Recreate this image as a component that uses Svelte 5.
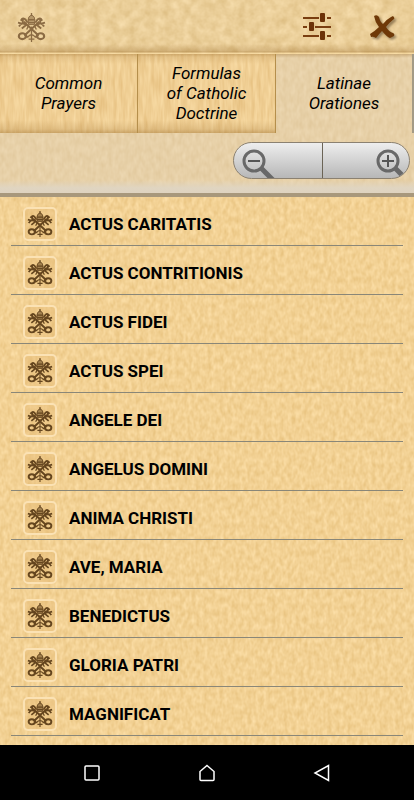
<script>
  const tabs = [
    ['Common', 'Prayers'],
    ['Formulas', 'of Catholic', 'Doctrine'],
    ['Latinae', 'Orationes'],
  ];

  const prayers = [
    'ACTUS CARITATIS',
    'ACTUS CONTRITIONIS',
    'ACTUS FIDEI',
    'ACTUS SPEI',
    'ANGELE DEI',
    'ANGELUS DOMINI',
    'ANIMA CHRISTI',
    'AVE, MARIA',
    'BENEDICTUS',
    'GLORIA PATRI',
    'MAGNIFICAT',
  ];

  let active = $state(2);
</script>

<!-- Parchment grain, stretched over whichever panel holds it -->
{#snippet grain(kind)}
  <svg class="grain" aria-hidden="true">
    <rect width="100%" height="100%" filter="url(#grain-{kind})" />
  </svg>
{/snippet}

<!-- Tiara over crossed keys -->
{#snippet emblem()}
  <svg class="emblem" viewBox="0 0 30 30" fill="none" stroke="currentColor" aria-hidden="true">
    <g stroke-width="2.2">
      <path d="M7 9 L22 23 M23 9 L8 23" />
      <ellipse cx="5.500" cy="24" rx="3.600" ry="3" />
      <ellipse cx="24.500" cy="24" rx="3.600" ry="3" />
      <path d="M8 22 L11 25.500 M22 22 L19 25.500" />
    </g>
    <path d="M15 14 V30 M11 25 Q15 20 19 25 M12 27 H18" stroke-width="1.3" />
    <g stroke-width="2">
      <path d="M2 14 Q5 9 9 12 M4 8 Q6 4 9 7 L11 10 M1 10 L5 11 M5 16 L10 12 M6 6 V11" />
      <path d="M28 14 Q25 9 21 12 M26 8 Q24 4 21 7 L19 10 M29 10 L25 11 M25 16 L20 12 M24 6 V11" />
    </g>
    <path d="M12 12 L11.500 7 Q11.500 3.500 15 2 Q18.500 3.500 18.500 7 L18 12 Z" fill="currentColor" fill-opacity="0.55" stroke-width="1" />
    <path d="M15 0 V3 M11.500 7 H18.500 M11.700 10 H18.300 M12 13 L10 17 M18 13 L20 17" stroke-width="1.400" />
  </svg>
{/snippet}

<svg class="defs" width="0" height="0" aria-hidden="true">
  <filter id="grain-header" x="0" y="0" width="100%" height="100%" color-interpolation-filters="sRGB">
    <feTurbulence type="fractalNoise" baseFrequency="0.11" numOctaves="3" seed="4" />
    <feColorMatrix values="0 0 0 .12 .86  0 0 0 .15 .735  0 0 0 .20 .50  0 0 0 0 1" />
  </filter>
  <filter id="grain-tab" x="0" y="0" width="100%" height="100%" color-interpolation-filters="sRGB">
    <feTurbulence type="fractalNoise" baseFrequency="0.3 0.05" numOctaves="2" seed="9" />
    <feColorMatrix values="0 0 0 .10 .89  0 0 0 .15 .735  0 0 0 .20 .48  0 0 0 0 1" />
  </filter>
  <filter id="grain-pale" x="0" y="0" width="100%" height="100%" color-interpolation-filters="sRGB">
    <feTurbulence type="fractalNoise" baseFrequency="0.24 0.12" numOctaves="2" seed="2" />
    <feColorMatrix values="0 0 0 .06 .875  0 0 0 .08 .775  0 0 0 .11 .60  0 0 0 0 1" />
  </filter>
  <filter id="grain-list" x="0" y="0" width="100%" height="100%" color-interpolation-filters="sRGB">
    <feTurbulence type="fractalNoise" baseFrequency="0.25 0.15" numOctaves="2" seed="7" />
    <feColorMatrix values="0 0 0 .10 .90  0 0 0 .14 .75  0 0 0 .20 .48  0 0 0 0 1" />
  </filter>
</svg>

<div class="app">
  <header class="header">
    {@render grain('header')}
    <span class="logo">{@render emblem()}</span>
    <div class="actions">
      <button class="action" aria-label="Settings">
        <svg width="28" height="30" viewBox="0 0 28 30" aria-hidden="true">
          <path d="M0 6 H16 M24 6 H28 M0 15 H4 M12 15 H28 M0 24 H16 M24 24 H28" stroke="#7a3e10" stroke-width="2" />
          <g fill="#6d3208">
            <rect x="17" y="1" width="5" height="9" rx="1" />
            <rect x="6" y="10" width="5" height="9" rx="1" />
            <rect x="17" y="19" width="5" height="9" rx="1" />
          </g>
        </svg>
      </button>
      <button class="action close" aria-label="Close">
        <svg width="28" height="30" viewBox="0 0 28 30" aria-hidden="true">
          <path
            d="M5 4 Q8 2 10 5 Q11 10 14 12 Q18 7 22 5 L24 4 Q26 6 25 7 Q21 10 17 15 Q20 20 24 21 Q26 22 25 24 L21 26 Q18 25 13 19 Q10 22 7 26 Q4 24 2 25 L1 22 Q6 19 10 15 Q6 10 5 4 Z"
            fill="#6f3908"
          />
        </svg>
      </button>
    </div>
  </header>

  <section class="panel">
    {@render grain('pale')}
    <div class="tabs" role="tablist">
      {#each tabs as lines, i}
        <button
          class="tab"
          class:active={active === i}
          role="tab"
          aria-selected={active === i}
          onclick={() => (active = i)}
        >
          {#if active !== i}{@render grain('tab')}{/if}
          <span class="tab-label">
            {#each lines as line}<span>{line}</span>{/each}
          </span>
        </button>
      {/each}
    </div>

    <div class="zoom-row">
      <div class="zoom">
        <button class="zoom-btn" aria-label="Zoom out">
          <svg width="34" height="35" viewBox="0 0 34 35" fill="none" stroke="#686868" aria-hidden="true">
            <circle cx="13" cy="17" r="10" stroke-width="3" />
            <path d="M20.500 24.500 L32 36" stroke-width="5" />
            <path d="M7 17 H19" stroke="#555" stroke-width="2" />
          </svg>
        </button>
        <button class="zoom-btn zoom-in" aria-label="Zoom in">
          <svg width="34" height="35" viewBox="0 0 34 35" fill="none" stroke="#686868" aria-hidden="true">
            <circle cx="13" cy="17" r="10" stroke-width="3" />
            <path d="M20.500 24.500 L32 36" stroke-width="5" />
            <path d="M7 17 H19 M13 11 V23" stroke="#555" stroke-width="2" />
          </svg>
        </button>
      </div>
    </div>
  </section>

  <main class="list">
    {@render grain('list')}
    <ul>
      {#each prayers as prayer}
        <li>
          <button class="prayer">
            <span class="tile">{@render emblem()}</span>
            <span>{prayer}</span>
          </button>
        </li>
      {/each}
    </ul>
  </main>

  <nav class="system-nav">
    <button aria-label="Recent apps">
      <svg width="18" height="18" viewBox="0 0 18 18" aria-hidden="true">
        <rect x="2" y="2" width="14" height="14" rx="1" />
      </svg>
    </button>
    <button aria-label="Home">
      <svg width="18" height="18" viewBox="0 0 18 18" aria-hidden="true">
        <path d="M9 1.500 L16 7.500 V15.500 Q16 16.500 15 16.500 H3 Q2 16.500 2 15.500 V7.500 Z" />
      </svg>
    </button>
    <button aria-label="Back">
      <svg width="18" height="18" viewBox="0 0 18 18" aria-hidden="true">
        <path d="M15.500 1.500 V16.500 L2 9 Z" />
      </svg>
    </button>
  </nav>
</div>

<style>
  :global(body) {
    margin: 0;
    background: #000;
  }

  .app {
    display: flex;
    flex-direction: column;
    min-height: 100vh;
    font-family: Roboto, 'Noto Sans', sans-serif;
    color: #000;
  }

  button {
    margin: 0;
    padding: 0;
    border: 0;
    background: none;
    color: inherit;
    font: inherit;
    cursor: pointer;
  }

  svg {
    display: block;
  }

  .defs {
    position: absolute;
  }

  .grain {
    position: absolute;
    inset: 0;
    z-index: -1;
    width: 100%;
    height: 100%;
  }

  .header,
  .panel,
  .tab,
  .list {
    position: relative;
    isolation: isolate;
  }

  /* Edge shading lies over the grain but under the content */
  .header::after,
  .panel::after,
  .tab::after {
    content: '';
    position: absolute;
    inset: 0;
    z-index: -1;
  }

  /* ── Header ─────────────────────────────────────────────── */

  .header {
    display: flex;
    align-items: center;
    justify-content: space-between;
    height: 54px;
    padding: 0 17px;
    box-sizing: border-box;
  }

  .header::after {
    background: linear-gradient(
      transparent 44px,
      rgba(150, 105, 40, 0.3) 51px,
      rgba(150, 105, 40, 0.45) 52px,
      rgba(255, 225, 165, 0.5) 53px
    );
  }

  .logo {
    width: 29px;
    color: #8b6b43;
  }

  .emblem {
    width: 100%;
    height: auto;
  }

  .actions {
    display: flex;
    gap: 38px;
  }

  .close svg {
    filter: drop-shadow(2px 2px 1px rgba(70, 50, 25, 0.5));
  }

  /* ── Tabs and zoom bar ──────────────────────────────────── */

  .panel {
    height: 143px;
    border-bottom: 4px solid #a8987c;
    box-sizing: border-box;
  }

  .panel::after {
    background: linear-gradient(transparent 126px, #e0d5c1 134px, #dfd3c0);
  }

  .tabs {
    display: grid;
    grid-template-columns: repeat(3, 1fr);
    height: 79px;
  }

  .tab {
    display: flex;
    justify-content: center;
    align-items: center;
    padding-bottom: 2px;
    border-right: 1px solid #b58f4c;
  }

  .tab::after {
    background: linear-gradient(
      rgba(155, 110, 45, 0.4),
      rgba(155, 110, 45, 0.15) 3px,
      transparent 10px,
      transparent 66px,
      rgba(155, 110, 45, 0.2) 75px,
      rgba(155, 110, 45, 0.45)
    );
  }

  .tab.active {
    border-right: 2px solid #a39a86;
  }

  .tab.active::after {
    background: linear-gradient(rgba(155, 110, 45, 0.35), transparent 4px);
  }

  .tab-label {
    display: flex;
    flex-direction: column;
    font-size: 17px;
    font-style: italic;
    line-height: 20px;
  }

  .zoom-row {
    display: flex;
    justify-content: flex-end;
    padding: 9px 4px 0 0;
  }

  .zoom {
    display: grid;
    grid-template-columns: 1fr 1fr;
    width: 177px;
    height: 37px;
    border: 1px solid #8b8171;
    border-radius: 19px;
    box-sizing: border-box;
    overflow: hidden;
    background: linear-gradient(#eee, #d5d5d5 45%, #b7b7b7);
  }

  .zoom-btn {
    display: flex;
    padding: 1px 7px 0;
  }

  .zoom-in {
    justify-content: flex-end;
    padding-right: 0;
    border-left: 1px solid #6b6456;
  }

  /* ── Prayer list ────────────────────────────────────────── */

  .list {
    flex: 1;
    padding: 0 11px 9px;
  }

  ul {
    margin: 0;
    padding: 0;
    list-style: none;
  }

  .prayer {
    display: flex;
    align-items: center;
    gap: 12px;
    width: 100%;
    height: 49px;
    padding: 5px 12px 0;
    border-bottom: 1px solid #8a8778;
    box-sizing: border-box;
    font-size: 17px;
    font-weight: 700;
    text-align: left;
  }

  .tile {
    width: 34px;
    height: 34px;
    padding: 2px;
    border: 2px solid #fbe2b4;
    border-radius: 5px;
    box-sizing: border-box;
    background: rgba(225, 180, 110, 0.35);
    color: #65461f;
  }

  /* ── System navigation ──────────────────────────────────── */

  .system-nav {
    display: grid;
    grid-template-columns: repeat(3, 1fr);
    height: 55px;
    padding: 0 35px;
    box-sizing: border-box;
    background: #000;
  }

  .system-nav button {
    display: grid;
    place-items: center;
  }

  .system-nav svg {
    fill: none;
    stroke: #fff;
    stroke-width: 1.5;
  }
</style>
